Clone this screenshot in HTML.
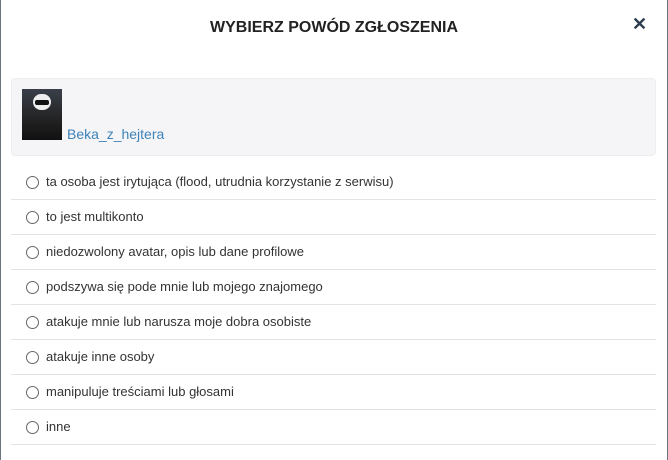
<!DOCTYPE html>
<html><head><meta charset="utf-8"><style>
body{margin:0;width:668px;height:453px;overflow:hidden;background:#fff;font-family:"Liberation Sans",sans-serif;color:#333;}
.frame{position:absolute;left:0;top:0;width:666px;height:460px;border-left:1px solid #6b7580;border-right:1px solid #6b7580;}
h1{position:absolute;left:0;width:668px;top:19px;margin:0;text-align:center;font-size:16px;font-weight:bold;color:#222;}
.x{position:absolute;left:632px;top:14px;font-size:18px;font-weight:bold;color:#2c3e50;}
.box{position:absolute;left:11px;top:78px;width:643px;height:76px;background:#f5f5f7;border:1px solid #eceef0;border-radius:4px;}
.av{position:absolute;left:10px;top:10px;width:40px;height:51px;background:linear-gradient(#3a3f4a,#222 60%,#111);}
.face{position:absolute;left:11px;top:5px;width:18px;height:16px;background:#eee;border-radius:8px;}
.eyes{position:absolute;left:13px;top:11px;width:14px;height:5px;background:#111;border-radius:2px;}
.name{position:absolute;left:55px;top:47px;font-size:14px;color:#3d82b8;}
.row{position:absolute;left:11px;width:645px;height:34px;border-bottom:1px solid #e3e3e3;font-size:13px;}
.row span{position:absolute;left:35px;top:9px;}
.row i{position:absolute;left:15px;top:11px;width:11px;height:11px;border:1px solid #666;border-radius:50%;}
</style></head><body>
<div class="frame"></div>
<h1>WYBIERZ POWÓD ZGŁOSZENIA</h1>
<div class="x">✕</div>
<div class="box"><div class="av"><div class="face"></div><div class="eyes"></div></div><div class="name">Beka_z_hejtera</div></div>
<div class="row" style="top:165px"><i></i><span>ta osoba jest irytująca (flood, utrudnia korzystanie z serwisu)</span></div>
<div class="row" style="top:200px"><i></i><span>to jest multikonto</span></div>
<div class="row" style="top:235px"><i></i><span>niedozwolony avatar, opis lub dane profilowe</span></div>
<div class="row" style="top:270px"><i></i><span>podszywa się pode mnie lub mojego znajomego</span></div>
<div class="row" style="top:305px"><i></i><span>atakuje mnie lub narusza moje dobra osobiste</span></div>
<div class="row" style="top:340px"><i></i><span>atakuje inne osoby</span></div>
<div class="row" style="top:375px"><i></i><span>manipuluje treściami lub głosami</span></div>
<div class="row" style="top:410px"><i></i><span>inne</span></div>
</body></html>
